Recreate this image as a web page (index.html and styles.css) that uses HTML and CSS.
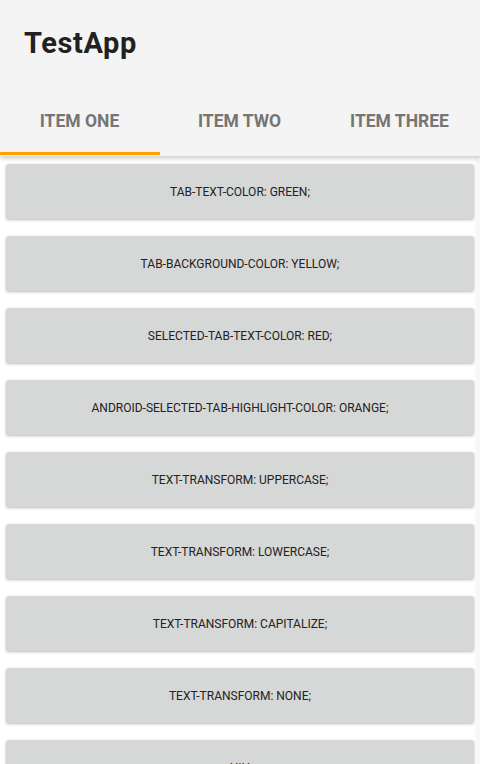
FILE: index.html
```html
<!DOCTYPE html>
<html>
<head>
<meta charset="utf-8">
<link rel="stylesheet" href="styles.css">
</head>
<body>
<div class="app">
  <header class="header">
    <div class="titlebar"><h1 class="title">TestApp</h1></div>
    <nav class="tabs">
      <div class="tab active">Item One</div>
      <div class="tab">Item Two</div>
      <div class="tab">Item Three</div>
    </nav>
  </header>
  <div class="body">
    <main class="list">
      <div class="card">tab-text-color: green;</div>
      <div class="card">tab-background-color: yellow;</div>
      <div class="card">selected-tab-text-color: red;</div>
      <div class="card">android-selected-tab-highlight-color: orange;</div>
      <div class="card">text-transform: uppercase;</div>
      <div class="card">text-transform: lowercase;</div>
      <div class="card">text-transform: capitalize;</div>
      <div class="card">text-transform: none;</div>
      <div class="card">HIH</div>
    </main>
    <div class="track"></div>
  </div>
</div>
</body>
</html>
```

FILE: styles.css
```css
html, body {
  margin: 0;
  padding: 0;
  height: 100%;
  overflow: hidden;
  background: #ffffff;
  font-family: Roboto, "Liberation Sans", sans-serif;
}
.app {
  display: flex;
  flex-direction: column;
  height: 764px;
}
.header {
  background: #f4f4f4;
  box-shadow: 0 2px 5px rgba(0,0,0,0.22);
  position: relative;
  z-index: 2;
  flex: none;
}
.titlebar {
  height: 86px;
  display: flex;
  align-items: center;
  padding-left: 24px;
}
.title {
  margin: 0;
  font-size: 29px;
  font-weight: 700;
  color: #212121;
  letter-spacing: 0.6px;
}
.tabs {
  display: grid;
  grid-template-columns: repeat(3, 1fr);
  height: 70px;
}
.tab {
  display: flex;
  align-items: center;
  justify-content: center;
  text-transform: uppercase;
  font-size: 17.5px;
  font-weight: 700;
  color: #757575;
  box-sizing: border-box;
  padding-top: 4px;
  padding-right: 1px;
  border-bottom: 3px solid transparent;
  margin-bottom: 1px;
}
.tab.active {
  border-bottom-color: #ffa000;
}
.body {
  display: flex;
  flex: 1;
  min-height: 0;
}
.list {
  width: 475px;
  flex: none;
  padding: 8px 0 0 6px;
  box-sizing: border-box;
  display: flex;
  flex-direction: column;
  gap: 17px;
}
.track {
  flex: 1;
  background: #f8f8f8;
}
.card {
  flex: none;
  height: 55px;
  width: 468px;
  background: #d6d7d7;
  border-radius: 3px;
  box-shadow: 0 1px 3px rgba(0,0,0,0.28);
  display: flex;
  align-items: center;
  justify-content: center;
  text-transform: uppercase;
  font-size: 12px;
  color: #222222;
}
```
